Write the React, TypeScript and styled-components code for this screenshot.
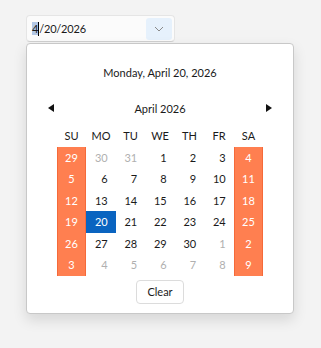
import styled, { createGlobalStyle, css } from "styled-components";

const GlobalStyle = createGlobalStyle`
  body {
    margin: 0;
    background: #f3f3f3;
    font-family: "Segoe UI", Lato, "Noto Sans", sans-serif;
  }
`;

const Page = styled.div`
  padding: 15px 0 0 26px;
  height: 333px;
`;

const Picker = styled.div`
  position: relative;
  width: 149px;
`;

const InputBox = styled.div`
  box-sizing: border-box;
  height: 27px;
  display: flex;
  align-items: center;
  justify-content: space-between;
  background: #fbfbfb;
  border: 1px solid #e5e5e5;
  border-bottom-color: #d0d0d0;
  border-radius: 4px;
  padding: 0 2px 0 5px;
  font-size: 11px;
  letter-spacing: -0.2px;
  color: #1a1a1a;
`;

const Selected = styled.span`
  background: #b3c8e6;
`;

const Caret = styled.span`
  display: inline-block;
  width: 1px;
  height: 14px;
  background: #000;
  vertical-align: -3px;
`;

const DropButton = styled.div`
  width: 26px;
  height: 22px;
  border-radius: 3px;
  background: #e6f1fc;
  display: flex;
  align-items: center;
  justify-content: center;
`;

const Popup = styled.div`
  position: absolute;
  top: 28px;
  left: 0;
  box-sizing: border-box;
  width: 268px;
  height: 271px;
  background: #fff;
  border: 1px solid #c8c8c8;
  border-radius: 4px;
  box-shadow: 0 6px 14px rgba(0, 0, 0, 0.12);
  padding: 20px 30px 0;
  display: flex;
  flex-direction: column;
  align-items: center;
  color: #1a1a1a;
  font-size: 11px;
`;

const LongDate = styled.div`
  height: 18px;
  line-height: 18px;
`;

const NavRow = styled.div`
  margin-top: 17px;
  width: 224px;
  display: flex;
  align-items: center;
  justify-content: space-between;
  height: 18px;
`;

const Arrow = styled.div<{ $dir: "left" | "right" }>`
  width: 0;
  height: 0;
  border-top: 4px solid transparent;
  border-bottom: 4px solid transparent;
  ${(p) =>
    p.$dir === "left"
      ? css`border-right: 6px solid #111;`
      : css`border-left: 6px solid #111;`}
`;

const Grid = styled.div`
  margin-top: 8px;
  display: grid;
  grid-template-columns: repeat(7, 29.5px);
  grid-auto-rows: 21.5px;
`;

const DayName = styled.div`
  display: flex;
  align-items: center;
  justify-content: center;
  height: 20px;
  margin-bottom: 1.5px;
`;

type Kind = "weekday" | "other" | "weekend" | "selected";

const Cell = styled.div<{ $kind: Kind }>`
  display: flex;
  align-items: center;
  justify-content: flex-end;
  padding-right: 8px;
  box-sizing: border-box;
  color: #1a1a1a;
  ${(p) =>
    p.$kind === "other" &&
    css`
      color: #b0b0b0;
    `}
  ${(p) =>
    p.$kind === "weekend" &&
    css`
      background: #ff7f50;
      color: #fff;
      justify-content: center;
      padding-right: 0;
      border-left: 1px solid #f56a3a;
      border-right: 1px solid #f56a3a;
    `}
  ${(p) =>
    p.$kind === "selected" &&
    css`
      background: #0a64c0;
      color: #fff;
    `}
`;

const ClearButton = styled.div`
  margin-top: 4px;
  box-sizing: border-box;
  width: 48px;
  height: 24px;
  border: 1px solid #dcdcdc;
  border-radius: 4px;
  display: flex;
  align-items: center;
  justify-content: center;
`;

const days = ["SU", "MO", "TU", "WE", "TH", "FR", "SA"];

const cells: number[] = [
  29, 30, 31, 1, 2, 3, 4,
  5, 6, 7, 8, 9, 10, 11,
  12, 13, 14, 15, 16, 17, 18,
  19, 20, 21, 22, 23, 24, 25,
  26, 27, 28, 29, 30, 1, 2,
  3, 4, 5, 6, 7, 8, 9,
];

function kindOf(i: number): Kind {
  const col = i % 7;
  if (col === 0 || col === 6) return "weekend";
  if (i === 22) return "selected";
  if (i < 3 || i > 32) return "other";
  return "weekday";
}

export default function App() {
  return (
    <Page>
      <GlobalStyle />
      <Picker>
        <InputBox>
          <span>
            <Selected>4</Selected>
            <Caret />
            /20/2026
          </span>
          <DropButton>
            <svg width="10" height="6" viewBox="0 0 10 6">
              <path d="M1 1 L5 5 L9 1" fill="none" stroke="#8a8a8a" strokeWidth="1" />
            </svg>
          </DropButton>
        </InputBox>
        <Popup>
          <LongDate>Monday, April 20, 2026</LongDate>
          <NavRow>
            <Arrow $dir="left" />
            <span>April 2026</span>
            <Arrow $dir="right" />
          </NavRow>
          <Grid>
            {days.map((d) => (
              <DayName key={d}>{d}</DayName>
            ))}
            {cells.map((n, i) => (
              <Cell key={i} $kind={kindOf(i)}>
                {n}
              </Cell>
            ))}
          </Grid>
          <ClearButton>Clear</ClearButton>
        </Popup>
      </Picker>
    </Page>
  );
}
